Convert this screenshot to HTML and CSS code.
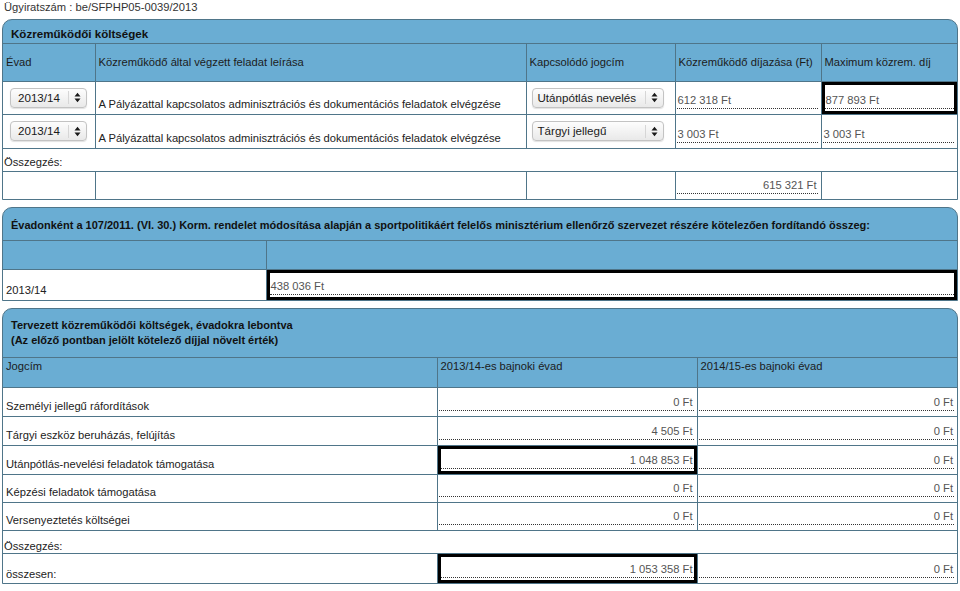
FILE: index.html
```html
<!DOCTYPE html>
<html lang="hu">
<head>
    <meta charset="UTF-8">
    <meta name="viewport" content="width=device-width, initial-scale=1.0">
    <title>Közreműködői költségek</title>
    <link rel="stylesheet" href="styles.css">
</head>
<body>

    <div class="docnum">Ügyiratszám : be/SFPHP05-0039/2013</div>

    <!-- 1. Közreműködői költségek -->
    <div class="panel p-costs">
        <div class="panel-title">Közreműködői költségek</div>
        <table class="grid">
            <colgroup>
                <col class="col-season"><col class="col-desc"><col class="col-type"><col class="col-fee"><col>
            </colgroup>
            <tr class="head-row">
                <th>Évad</th>
                <th>Közreműködő által végzett feladat leírása</th>
                <th>Kapcsolódó jogcím</th>
                <th>Közreműködő díjazása (Ft)</th>
                <th>Maximum közrem. díj</th>
            </tr>
            <tr class="item-row">
                <td class="mid pad-season">
                    <span class="select sel-season"><span class="sel-text">2013/14</span><span class="sel-arrows"><svg width="7" height="11" viewBox="0 0 7 11"><path d="M0.5 4.5 3.5 0.8 6.5 4.5Z M0.5 6.5 3.5 10.2 6.5 6.5Z" fill="#1a1a1a"/></svg></span></span>
                </td>
                <td class="text">A Pályázattal kapcsolatos adminisztrációs és dokumentációs feladatok elvégzése</td>
                <td class="mid pad-type">
                    <span class="select sel-type"><span class="sel-text">Utánpótlás nevelés</span><span class="sel-arrows"><svg width="7" height="11" viewBox="0 0 7 11"><path d="M0.5 4.5 3.5 0.8 6.5 4.5Z M0.5 6.5 3.5 10.2 6.5 6.5Z" fill="#1a1a1a"/></svg></span></span>
                </td>
                <td class="field"><span class="val">612 318 Ft</span></td>
                <td class="field hl"><span class="val">877 893 Ft</span></td>
            </tr>
            <tr class="item-row row-2">
                <td class="mid pad-season">
                    <span class="select sel-season"><span class="sel-text">2013/14</span><span class="sel-arrows"><svg width="7" height="11" viewBox="0 0 7 11"><path d="M0.5 4.5 3.5 0.8 6.5 4.5Z M0.5 6.5 3.5 10.2 6.5 6.5Z" fill="#1a1a1a"/></svg></span></span>
                </td>
                <td class="text">A Pályázattal kapcsolatos adminisztrációs és dokumentációs feladatok elvégzése</td>
                <td class="mid pad-type">
                    <span class="select sel-type"><span class="sel-text">Tárgyi jellegű</span><span class="sel-arrows"><svg width="7" height="11" viewBox="0 0 7 11"><path d="M0.5 4.5 3.5 0.8 6.5 4.5Z M0.5 6.5 3.5 10.2 6.5 6.5Z" fill="#1a1a1a"/></svg></span></span>
                </td>
                <td class="field"><span class="val">3 003 Ft</span></td>
                <td class="field"><span class="val">3 003 Ft</span></td>
            </tr>
            <tr class="label-row">
                <td colspan="5">Összegzés:</td>
            </tr>
            <tr class="sum-row">
                <td></td>
                <td></td>
                <td></td>
                <td class="field"><span class="val right">615 321 Ft</span></td>
                <td></td>
            </tr>
        </table>
    </div>

    <!-- 2. Kötelező díj -->
    <div class="panel p-fee">
        <div class="panel-title">Évadonként a 107/2011. (VI. 30.) Korm. rendelet módosítása alapján a sportpolitikáért felelős minisztérium ellenőrző szervezet részére kötelezően fordítandó összeg:</div>
        <table class="grid">
            <colgroup>
                <col class="col-fseason"><col>
            </colgroup>
            <tr class="head-row">
                <th></th>
                <th></th>
            </tr>
            <tr class="item-row">
                <td class="text">2013/14</td>
                <td class="field hl"><span class="val">438 036 Ft</span></td>
            </tr>
        </table>
    </div>

    <!-- 3. Tervezett költségek évadokra -->
    <div class="panel p-plan">
        <div class="panel-title">Tervezett közreműködői költségek, évadokra lebontva<br>(Az előző pontban jelölt kötelező díjjal növelt érték)</div>
        <table class="grid">
            <colgroup>
                <col class="col-title"><col class="col-year"><col>
            </colgroup>
            <tr class="head-row">
                <th>Jogcím</th>
                <th>2013/14-es bajnoki évad</th>
                <th>2014/15-es bajnoki évad</th>
            </tr>
            <tr class="item-row r1">
                <td class="text">Személyi jellegű ráfordítások</td>
                <td class="field"><span class="val right">0 Ft</span></td>
                <td class="field"><span class="val right">0 Ft</span></td>
            </tr>
            <tr class="item-row r2">
                <td class="text">Tárgyi eszköz beruházás, felújítás</td>
                <td class="field"><span class="val right">4 505 Ft</span></td>
                <td class="field"><span class="val right">0 Ft</span></td>
            </tr>
            <tr class="item-row r3">
                <td class="text">Utánpótlás-nevelési feladatok támogatása</td>
                <td class="field hl"><span class="val right">1 048 853 Ft</span></td>
                <td class="field"><span class="val right">0 Ft</span></td>
            </tr>
            <tr class="item-row r4">
                <td class="text">Képzési feladatok támogatása</td>
                <td class="field"><span class="val right">0 Ft</span></td>
                <td class="field"><span class="val right">0 Ft</span></td>
            </tr>
            <tr class="item-row r5">
                <td class="text">Versenyeztetés költségei</td>
                <td class="field"><span class="val right">0 Ft</span></td>
                <td class="field"><span class="val right">0 Ft</span></td>
            </tr>
            <tr class="label-row">
                <td colspan="3">Összegzés:</td>
            </tr>
            <tr class="total-row">
                <td class="text">összesen:</td>
                <td class="field hl"><span class="val right">1 053 358 Ft</span></td>
                <td class="field"><span class="val right">0 Ft</span></td>
            </tr>
        </table>
    </div>

</body>
</html>
```

FILE: styles.css
```css
body {
    margin: 0;
    padding: 0 2px;
    font-family: "Liberation Sans", Arial, Helvetica, sans-serif;
    font-size: 11.2px;
    line-height: 14px;
    color: #222;
    background-color: #fff;
}
.docnum {
    height: 19px;
    padding-left: 2px;
    color: #333;
}

/* panels */
.panel {
    width: 956px;
    box-sizing: border-box;
    background-color: #6aadd3;
    border: 1px solid #4f7589;
    border-radius: 10px 10px 0 0;
    margin-bottom: 7px;
    overflow: hidden;
}
.panel-title {
    font-weight: bold;
    font-size: 11px;
    color: #111;
    padding: 6px 8px 0;
    box-sizing: border-box;
    border-bottom: 1px solid #4f7589;
}
.p-costs .panel-title {
    height: 24px;
    padding-top: 7px;
    font-size: 11.6px;
}
.p-fee .panel-title {
    height: 33px;
    padding-top: 10px;
}
.p-plan .panel-title {
    height: 49px;
    padding-top: 9px;
    line-height: 15px;
}

/* tables */
.grid {
    width: 100%;
    border-collapse: collapse;
    border-style: hidden;
    table-layout: fixed;
}
.grid th,
.grid td {
    border: 1px solid #4f7589;
    padding: 0 3px;
    text-align: left;
    font-weight: normal;
}
.grid th {
    color: #1c1c1c;
    vertical-align: middle;
}
.grid td {
    background-color: #fff;
    vertical-align: bottom;
}
.col-season { width: 92px; }
.col-desc { width: 431px; }
.col-type { width: 149px; }
.col-fee { width: 146px; }
.col-fseason { width: 263px; }
.col-title { width: 434px; }
.col-year { width: 260px; }

.p-costs .head-row { height: 37px; }
.p-costs .item-row { height: 33px; }
.p-costs .row-2 { height: 34px; }
.p-costs .sum-row { height: 28px; }
.label-row { height: 23px; }
.label-row td {
    padding: 0 0 2px 1px;
}
.p-plan .label-row td {
    padding-bottom: 0;
}
.p-fee .head-row { height: 28px; }
.p-fee .item-row { height: 31px; }
.p-plan .head-row { height: 29px; }
.p-plan .head-row th {
    vertical-align: top;
    padding-top: 1px;
}
.p-plan .item-row { height: 29px; }
.p-plan .r4,
.p-plan .r5 { height: 28px; }
.p-plan .total-row { height: 30px; }
.p-plan .total-row td.text { padding-bottom: 2px; }

.grid td.text {
    padding-bottom: 3px;
}
.grid td.mid {
    vertical-align: middle;
}
.grid td.pad-season { padding-left: 7px; }
.grid td.pad-type { padding-left: 5px; }
.grid td.field {
    padding: 0 3px 5px 1px;
}
.grid td.hl {
    padding-left: 3px;
    box-shadow: inset 0 0 0 3px #000;
}

/* read-only amount fields */
.val {
    display: block;
    height: 15px;
    padding: 0 1px;
    color: #555;
    border-bottom: 1px dotted #333;
    white-space: nowrap;
}
.val.right {
    text-align: right;
}

/* select look */
.select {
    display: inline-flex;
    align-items: center;
    box-sizing: border-box;
    height: 20px;
    border: 1px solid #c3c3c3;
    border-radius: 4px;
    background: linear-gradient(#fdfdfd, #e9e9e9);
    box-shadow: 0 1px 1px rgba(0, 0, 0, 0.12);
    color: #1a1a1a;
    font-size: 11.6px;
}
.sel-season { width: 77px; }
.sel-type { width: 132px; }
.sel-text {
    flex: 1;
    padding-left: 7px;
    white-space: nowrap;
}
.sel-type .sel-text { padding-left: 5px; }
.sel-arrows {
    width: 17px;
    height: 13px;
    border-left: 1px solid #d6d6d6;
    display: flex;
    align-items: center;
    justify-content: center;
}
```
